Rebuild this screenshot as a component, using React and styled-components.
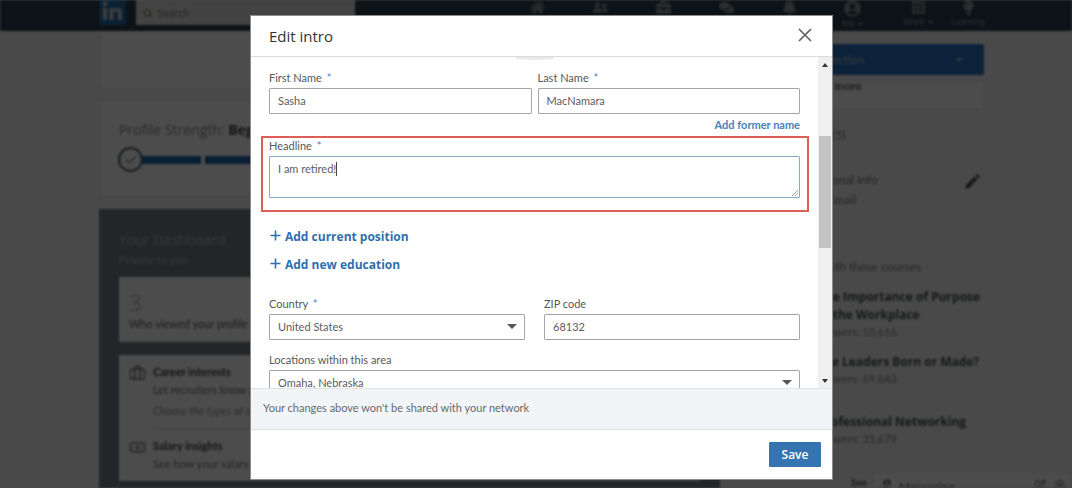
import React, { useState } from 'react'

import styled, { createGlobalStyle, css } from 'styled-components'
import {
  FaBell,
  FaBriefcase,
  FaCaretDown,
  FaComments,
  FaHome,
  FaLightbulb,
  FaRegEdit,
  FaUserCircle,
  FaUserFriends
} from 'react-icons/fa'
import { Briefcase, Check, Banknote, Search, Settings } from 'lucide-react'
import { BsGrid3X3GapFill } from 'react-icons/bs'

const GlobalStyle = createGlobalStyle`
  * {
    box-sizing: border-box;
  }

  body {
    margin: 0;
    background: #f5f5f5;
    color: #434649;
    font-family: Lato, 'Open Sans', sans-serif;
    font-size: 11px;
    line-height: 16px;
  }

  button,
  input,
  select,
  textarea {
    font: inherit;
    color: inherit;
  }
`

const headingFont = "'Open Sans', Lato, sans-serif"

/* ---------- page behind the dialog ---------- */

const Page = styled.div`
  height: 100vh;
  overflow: hidden;
  filter: blur(1px);
`

const NavBar = styled.header`
  padding-left: 11px;
  background: #283e4a;
`

const NavInner = styled.div`
  display: flex;
  align-items: flex-start;
  width: 885px;
  max-width: 100%;
  height: 31px;
  margin: 0 auto;
`

const Logo = styled.svg`
  width: 27px;
  height: 25px;
  margin-right: 10px;
`

const SearchBox = styled.label`
  display: flex;
  align-items: center;
  gap: 5px;
  width: 219px;
  height: 25px;
  padding: 0 7px;
  background: #e1e1df;
  color: #777;

  input {
    width: 100%;
    padding: 0;
    border: 0;
    background: none;
  }

  input::placeholder {
    color: #888;
  }
`

const NavItems = styled.nav`
  display: flex;
  margin-left: auto;
`

const NavItem = styled.a`
  display: flex;
  flex-direction: column;
  align-items: center;
  gap: 1px;
  width: ${({ $width }) => $width || 63}px;
  color: #8f989e;
  font-size: 9px;
  line-height: 12px;
  text-decoration: none;
  white-space: nowrap;

  svg {
    flex: none;
  }

  span {
    display: flex;
    align-items: center;
    gap: 3px;
  }
`

const Columns = styled.div`
  padding-left: 11px;
`

const ColumnsInner = styled.div`
  display: grid;
  grid-template-columns: minmax(0, 1fr) 246px;
  gap: 18px;
  width: 885px;
  max-width: 100%;
  margin: 0 auto;
`

const Main = styled.main`
  display: flex;
  flex-direction: column;
  gap: 12px;
`

const card = css`
  background: #fff;
  border: 1px solid #e4e4e4;
`

const TopCard = styled.section`
  ${card}
  height: 57px;
  border-top: 0;
`

const StrengthCard = styled.section`
  ${card}
  height: 97px;
  padding: 19px;
`

const StrengthTitle = styled.h2`
  margin: 0 0 7px;
  color: #888;
  font-family: ${headingFont};
  font-size: 14px;
  font-weight: 400;
  line-height: 20px;

  b {
    color: #444;
  }
`

const Meter = styled.div`
  display: flex;
  align-items: center;
  gap: 4px;
`

const MeterBadge = styled.span`
  display: grid;
  place-items: center;
  width: 25px;
  height: 25px;
  margin: 0 -5px 0 -1px;
  border: 2px solid #4a5963;
  border-radius: 50%;
  color: #777;
`

const MeterStep = styled.span`
  width: ${({ $first }) => ($first ? 59 : 66)}px;
  height: 8px;
  background: #1f66ac;
`

const Dashboard = styled.section`
  min-height: 290px;
  padding: 21px 20px;
  background: #738088;
`

const DashboardTitle = styled.h2`
  margin: 0;
  color: #b6bec3;
  font-family: ${headingFont};
  font-size: 14px;
  font-weight: 400;
  line-height: 20px;
`

const DashboardNote = styled.p`
  margin: 0 0 8px;
  color: #aeb6bb;
  font-size: 12px;
  font-style: italic;
  line-height: 19px;
`

const Stat = styled.div`
  height: 65px;
  margin-bottom: 13px;
  padding: 11px 10px;
  background: #fff;
  color: #666;

  strong {
    display: block;
    color: #aaa;
    font-family: ${headingFont};
    font-size: 22px;
    font-weight: 300;
    line-height: 28px;
  }
`

const Tips = styled.div`
  padding: 8px 10px;
  background: #fff;
`

const Tip = styled.div`
  display: flex;
  gap: 7px;
  color: #777;

  & + & {
    margin-top: 8px;
  }

  svg {
    flex: none;
    margin-top: 2px;
  }

  div {
    flex: 1;
  }

  h3,
  p {
    margin: 0;
    font-size: 11px;
    line-height: 18px;
  }

  h3 {
    color: #444;
  }

  em {
    display: block;
    padding: 3px 0 8px;
    border-bottom: 1px solid #ddd;
    color: #999;
    line-height: 18px;
  }
`

const Sidebar = styled.aside`
  padding-top: 13px;
`

const SectionButton = styled.button`
  display: flex;
  align-items: center;
  justify-content: space-between;
  width: 100%;
  height: 31px;
  padding: 0 19px 0 27px;
  border: 0;
  border-radius: 2px;
  background: #2a74c4;
  color: #b5c4d4;
  font-size: 12px;
`

const MoreCard = styled.div`
  ${card}
  height: 29px;
  margin-top: 6px;
  padding-left: 63px;
  color: #666;
  line-height: 8px;
  font-size: 12px;
`

const SideRow = styled.div`
  display: flex;
  justify-content: space-between;
  padding: ${({ $padding }) => $padding};
  border-bottom: 1px solid #e6e6e6;
  color: #777;
  font-size: 12px;
  line-height: 20px;

  p {
    margin: 0;
  }

  svg {
    margin-top: 4px;
  }
`

const SideTitle = styled.h3`
  margin: 13px 0 11px;
  padding-left: ${({ $indent }) => $indent}px;
  color: #777;
  font-size: 12px;
  font-weight: 400;
  line-height: 20px;
  white-space: nowrap;
`

const Course = styled.div`
  min-height: ${({ $height }) => $height}px;
  padding-left: ${({ $indent }) => $indent}px;
  color: #888;
  white-space: nowrap;

  h4 {
    margin: 0;
    color: #4a5055;
    font-family: ${headingFont};
    font-size: 12px;
    line-height: 18px;
  }

  p {
    margin: 0;
    font-size: 11px;
    line-height: 16px;
  }
`

const SeeMore = styled.a`
  position: fixed;
  left: 851px;
  bottom: -2px;
  color: #444;
  font-weight: 600;
  font-size: 10px;
  text-decoration: none;
`

const Messaging = styled.div`
  position: fixed;
  right: 0;
  bottom: 0;
  display: flex;
  align-items: flex-start;
  gap: 8px;
  width: 199px;
  height: 17px;
  padding: 7px 5px 0 9px;
  overflow: hidden;
  background: #fff;
  border: 1px solid #ddd;
  color: #666;
  font-size: 12px;

  b {
    flex: 1;
    font-weight: 400;
  }
`

/* ---------- dialog ---------- */

const Overlay = styled.div`
  position: fixed;
  inset: 0;
  display: flex;
  justify-content: center;
  align-items: flex-start;
  padding: 15px 0 8px 11px;
  background: rgba(0, 0, 0, 0.7);
`

const Dialog = styled.form`
  display: flex;
  flex-direction: column;
  width: 583px;
  max-width: 100%;
  max-height: 100%;
  background: #fff;
  border: 1px solid #8c8c8c;
`

const DialogHeader = styled.div`
  display: flex;
  align-items: center;
  justify-content: space-between;
  flex: none;
  height: 41px;
  padding: 0 20px 0 18px;
  border-bottom: 1px solid #dcdcdc;

  h1 {
    margin: 0;
    color: #333;
    font-family: ${headingFont};
    font-size: 15px;
    font-weight: 400;
    line-height: 24px;
  }
`

const CloseButton = styled.button`
  display: flex;
  padding: 0 0 2px;
  border: 0;
  background: none;
  color: #5c6063;
`

const Body = styled.div`
  display: flex;
  min-height: 0;
`

const Fields = styled.div`
  flex: 1;
  min-width: 0;
  max-height: 331px;
  padding: 0 18px;
  overflow: hidden;
`

const AvatarEdge = styled.div`
  width: 38px;
  height: 3px;
  margin: 0 auto;
  border-radius: 0 0 50% 50%;
  background: #e9e9e9;
`

const Row = styled.div`
  display: grid;
  grid-template-columns: 1fr 1fr;
  gap: ${({ $gap }) => $gap}px;
  margin: ${({ $margin }) => $margin};
`

const Label = styled.label`
  display: block;
  padding-bottom: 2px;
  color: #55585b;

  span {
    margin-left: 2px;
    color: #3f7fbf;
  }
`

const control = css`
  display: block;
  width: 100%;
  height: 26px;
  padding: 0 8px 1px;
  border: 1px solid #a3a6a9;
  border-radius: 1px;
  background: #fff;
  color: #5a5d60;
  outline: none;
`

const Input = styled.input`
  ${control}
`

const SelectWrap = styled.div`
  position: relative;

  svg {
    position: absolute;
    top: 10px;
    right: 8px;
    pointer-events: none;
  }
`

const Select = styled.select`
  ${control}
  appearance: none;
`

const FormerName = styled.a`
  display: block;
  margin: 2px 0 3px;
  color: #4484bd;
  font-weight: 700;
  line-height: 17px;
  text-align: right;
  text-decoration: none;
`

const Highlight = styled.div`
  margin: 0 -9px 0 -8px;
  padding: 0 7px 12px 6px;
  border: 2px solid #dc5f57;
`

const TextAreaWrap = styled.div`
  position: relative;
`

const TextArea = styled.textarea`
  ${control}
  height: 42px;
  padding: 4px 8px;
  border-color: #8aa9c6;
  resize: none;
`

const Grip = styled.svg`
  position: absolute;
  right: 2px;
  bottom: 2px;
  pointer-events: none;
`

const Caret = styled.i`
  position: absolute;
  top: 6px;
  left: 67px;
  width: 1px;
  height: 14px;
  background: #444;
`

const AddLinks = styled.div`
  display: flex;
  flex-direction: column;
  align-items: flex-start;
  gap: 8px;
  margin-top: 15px;
`

const AddButton = styled.button`
  display: flex;
  gap: 4px;
  padding: 0 0 0 1px;
  border: 0;
  background: none;
  color: #2f6fae;
  font-family: ${headingFont};
  font-size: 12px;
  font-weight: 700;
  line-height: 20px;

  svg {
    margin-top: 3px;
  }
`

const ScrollTrack = styled.div`
  display: flex;
  flex-direction: column;
  align-items: center;
  flex: none;
  width: 14px;
  padding: 6px 0 5px;
  background: #f0f0f0;
`

const ScrollThumb = styled.div`
  width: 12px;
  height: 112px;
  margin: 69px 0 auto;
  background: #c3c3c3;
`

const Notice = styled.div`
  flex: none;
  padding: 11px 12px 13px;
  border-top: 1px solid #e0e3e5;
  border-bottom: 1px solid #e0e3e5;
  background: #f2f5f8;
  color: #66696c;
`

const Footer = styled.div`
  display: flex;
  justify-content: flex-end;
  flex: none;
  padding: 12px 11px;
`

const SaveButton = styled.button`
  width: 52px;
  height: 25px;
  padding: 0;
  border: 0;
  border-radius: 1px;
  background: #3674b1;
  color: #fff;
  font-family: ${headingFont};
  font-size: 12px;
  font-weight: 600;
`

const navItems = [
  { label: 'Home', Icon: FaHome },
  { label: 'My Network', Icon: FaUserFriends },
  { label: 'Jobs', Icon: FaBriefcase },
  { label: 'Messaging', Icon: FaComments },
  { label: 'Notifications', Icon: FaBell },
  { label: 'Me', Icon: FaUserCircle, size: 17, caret: true },
  { label: 'Work', Icon: BsGrid3X3GapFill, width: 68, caret: true },
  { label: 'Learning', Icon: FaLightbulb, width: 32 }
]

const courses = [
  { lines: ['The Importance of Purpose', 'in the Workplace'], viewers: '10,616', height: 65 },
  { lines: ['Are Leaders Born or Made?'], viewers: '69,643', height: 60 },
  { lines: ['Professional Networking'], viewers: '35,679', height: 50 }
]

function Arrow({ up, width = 10, height = 5, color = '#55585b' }) {
  return (
    <svg width={width} height={height} viewBox='0 0 10 5' preserveAspectRatio='none' aria-hidden='true'>
      <path d={up ? 'M0 5h10L5 0z' : 'M0 0h10L5 5z'} fill={color} />
    </svg>
  )
}

function Plus() {
  return (
    <svg width='11' height='11' viewBox='0 0 11 11' aria-hidden='true'>
      <path d='M5.5 0.5v10M0.5 5.5h10' stroke='currentColor' strokeWidth='1.6' />
    </svg>
  )
}

function Pencil() {
  return (
    <svg width='16' height='16' viewBox='0 0 16 16' aria-hidden='true'>
      <path d='M1 15l1-4 8.500-8.500 3 3L5 14z' fill='#4a545c' />
      <path d='M11.500 1.500l1-1c.4-.4 1-.4 1.400 0l1.600 1.600c.4.4.4 1 0 1.400l-1 1z' fill='#4a545c' />
    </svg>
  )
}

function Field({ id, label, required, children }) {
  return (
    <div>
      <Label htmlFor={id}>
        {label} {required && <span>*</span>}
      </Label>
      {children}
    </div>
  )
}

function ProfilePage() {
  return (
    <Page>
      <NavBar>
        <NavInner>
          <Logo viewBox='0 0 27 25' aria-label='LinkedIn'>
            <rect width='27' height='25' rx='2' fill='#246fae' />
            <circle cx='6' cy='4' r='2.4' fill='#ccc' />
            <path
              d='M4 8h4v12H4zM10.500 8h3.800v1.700c.8-1.300 2-2 3.800-2 3.300 0 4.900 2 4.900 5.500V20h-4v-6.200c0-1.700-.6-2.800-2-2.800-1.600 0-2.500 1.100-2.500 2.900V20h-4z'
              fill='#ccc'
            />
          </Logo>
          <SearchBox>
            <Search size={10} strokeWidth={3} />
            <input type='search' placeholder='Search' aria-label='Search' />
          </SearchBox>
          <NavItems>
            {navItems.map(({ label, Icon, size, width, caret }) => (
              <NavItem href='#' key={label} $width={width}>
                <Icon size={size || 15} />
                <span>
                  {label}
                  {caret && <Arrow width={5} height={3} color='#8f989e' />}
                </span>
              </NavItem>
            ))}
          </NavItems>
        </NavInner>
      </NavBar>

      <Columns>
        <ColumnsInner>
          <Main>
            <TopCard />
            <StrengthCard>
              <StrengthTitle>
                Profile Strength: <b>Beginner</b>
              </StrengthTitle>
              <Meter>
                <MeterBadge>
                  <Check size={14} />
                </MeterBadge>
                <MeterStep $first />
                <MeterStep />
              </Meter>
            </StrengthCard>
            <Dashboard>
              <DashboardTitle>Your Dashboard</DashboardTitle>
              <DashboardNote>Private to you</DashboardNote>
              <Stat>
                <strong>3</strong>
                Who viewed your profile
              </Stat>
              <Tips>
                <Tip>
                  <Briefcase size={17} />
                  <div>
                    <h3>Career interests</h3>
                    <p>Let recruiters know you’re open</p>
                    <em>Choose the types of opportunities</em>
                  </div>
                </Tip>
                <Tip>
                  <Banknote size={17} />
                  <div>
                    <h3>Salary insights</h3>
                    <p>See how your salary compares</p>
                  </div>
                </Tip>
              </Tips>
            </Dashboard>
          </Main>

          <Sidebar>
            <SectionButton type='button'>
              Add profile section
              <FaCaretDown size={11} />
            </SectionButton>
            <MoreCard>
              <b>Show more</b>
            </MoreCard>
            <SideRow $padding='15px 0 11px 94px'>(5)</SideRow>
            <SideRow $padding='13px 4px 33px'>
              <div>
                <p>Contact and Personal Info</p>
                <p>Your profile and Email</p>
              </div>
              <Pencil />
            </SideRow>
            <SideTitle $indent={31}>Stand out with these courses</SideTitle>
            {courses.map(({ lines, viewers, height }) => (
              <Course key={viewers} $height={height} $indent={80}>
                {lines.map((line) => (
                  <h4 key={line}>{line}</h4>
                ))}
                <p>Viewers: {viewers}</p>
              </Course>
            ))}
          </Sidebar>
        </ColumnsInner>
      </Columns>

      <SeeMore href='#'>See</SeeMore>
      <Messaging>
        <FaUserCircle size={8} />
        <b>Messaging</b>
        <FaRegEdit size={11} />
        <Settings size={12} />
      </Messaging>
    </Page>
  )
}

function EditIntroDialog() {
  const [form, setForm] = useState({
    first: 'Sasha',
    last: 'MacNamara',
    headline: 'I am retired!',
    zip: '68132'
  })

  const bind = (name) => ({
    id: name,
    value: form[name],
    onChange: (e) => setForm({ ...form, [name]: e.target.value })
  })

  return (
    <Overlay>
      <Dialog role='dialog' aria-label='Edit intro' onSubmit={(e) => e.preventDefault()}>
        <DialogHeader>
          <h1>Edit intro</h1>
          <CloseButton type='button' aria-label='Close'>
            <svg width='14' height='14' viewBox='0 0 14 14'>
              <path d='M1 1l12 12M13 1L1 13' stroke='currentColor' strokeWidth='1.6' />
            </svg>
          </CloseButton>
        </DialogHeader>

        <Body>
          <Fields>
            <AvatarEdge />
            <Row $gap={6} $margin='10px 0 0'>
              <Field id='first' label='First Name' required>
                <Input {...bind('first')} />
              </Field>
              <Field id='last' label='Last Name' required>
                <Input {...bind('last')} />
              </Field>
            </Row>
            <FormerName href='#'>Add former name</FormerName>

            <Highlight>
              <Field id='headline' label='Headline' required>
                <TextAreaWrap>
                  <TextArea {...bind('headline')} />
                  <Caret />
                  <Grip width='6' height='6' viewBox='0 0 6 6' aria-hidden='true'>
                    <path d='M0 6L6 0M3 6l3-3' stroke='#a8a8a8' />
                  </Grip>
                </TextAreaWrap>
              </Field>
            </Highlight>

            <AddLinks>
              <AddButton type='button'>
                <Plus />
                Add current position
              </AddButton>
              <AddButton type='button'>
                <Plus />
                Add new education
              </AddButton>
            </AddLinks>

            <Row $gap={19} $margin='21px 0 12px'>
              <Field id='country' label='Country' required>
                <SelectWrap>
                  <Select id='country'>
                    <option>United States</option>
                  </Select>
                  <Arrow />
                </SelectWrap>
              </Field>
              <Field id='zip' label='ZIP code'>
                <Input {...bind('zip')} />
              </Field>
            </Row>

            <Field id='area' label='Locations within this area'>
              <SelectWrap>
                <Select id='area'>
                  <option>Omaha, Nebraska</option>
                </Select>
                <Arrow />
              </SelectWrap>
            </Field>
          </Fields>
          <ScrollTrack aria-hidden='true'>
            <Arrow up width={6} height={4} color='#333' />
            <ScrollThumb />
            <Arrow width={6} height={4} color='#333' />
          </ScrollTrack>
        </Body>

        <Notice>Your changes above won't be shared with your network</Notice>
        <Footer>
          <SaveButton type='submit'>Save</SaveButton>
        </Footer>
      </Dialog>
    </Overlay>
  )
}

export default function App() {
  return (
    <>
      <GlobalStyle />
      <ProfilePage />
      <EditIntroDialog />
    </>
  )
}
